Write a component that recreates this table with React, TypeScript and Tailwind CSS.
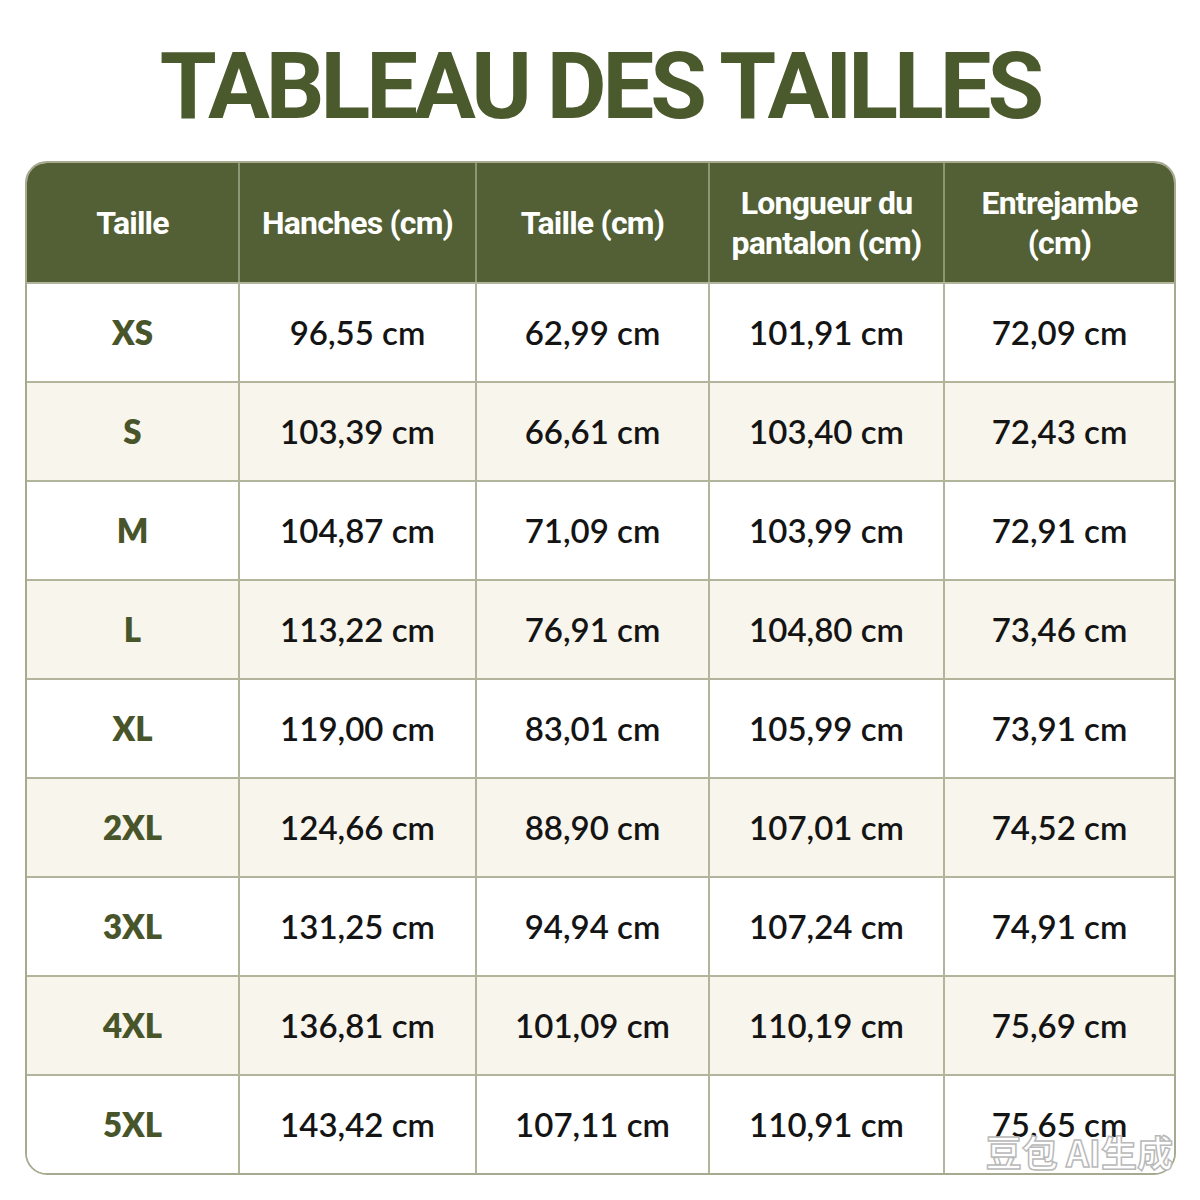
const headers = ["Taille", "Hanches (cm)", "Taille (cm)", "Longueur du\npantalon (cm)", "Entrejambe\n(cm)"];

const rows = [
  ["XS", "96,55 cm", "62,99 cm", "101,91 cm", "72,09 cm"],
  ["S", "103,39 cm", "66,61 cm", "103,40 cm", "72,43 cm"],
  ["M", "104,87 cm", "71,09 cm", "103,99 cm", "72,91 cm"],
  ["L", "113,22 cm", "76,91 cm", "104,80 cm", "73,46 cm"],
  ["XL", "119,00 cm", "83,01 cm", "105,99 cm", "73,91 cm"],
  ["2XL", "124,66 cm", "88,90 cm", "107,01 cm", "74,52 cm"],
  ["3XL", "131,25 cm", "94,94 cm", "107,24 cm", "74,91 cm"],
  ["4XL", "136,81 cm", "101,09 cm", "110,19 cm", "75,69 cm"],
  ["5XL", "143,42 cm", "107,11 cm", "110,91 cm", "75,65 cm"],
];

const condensed = { fontFamily: 'Roboto, "Liberation Sans", sans-serif' };

export default function App() {
  return (
    <div className="relative w-[1200px] h-[1200px] bg-white" style={{ fontFamily: 'Lato, "Open Sans", sans-serif' }}>
      <h1
        className="pt-[41px] h-[161px] text-center text-[92px] leading-none font-bold tracking-[-4px] text-[#4b5a2c]"
        style={condensed}
      >
        TABLEAU DES TAILLES
      </h1>

      <div className="ml-[25px] w-[1151px] rounded-[22px] border-2 border-[#a8aa90] overflow-hidden">
        <div className="grid grid-cols-[211px_237px_233px_235px_231px] h-[119px] bg-[#535f35]">
          {headers.map((h, i) => (
            <div
              key={i}
              className={`flex items-center justify-center text-center whitespace-pre-line text-white font-bold text-[32px] leading-[40px] tracking-[-0.8px] ${i > 0 ? "border-l-2 border-[#8d9574]" : ""}`}
              style={condensed}
            >
              {h}
            </div>
          ))}
        </div>
        {rows.map((r, ri) => (
          <div
            key={ri}
            className={`grid grid-cols-[211px_237px_233px_235px_231px] h-[99px] border-t-2 border-[#b3b49c] ${ri % 2 === 1 ? "bg-[#f8f5ec]" : "bg-white"}`}
          >
            {r.map((c, ci) => (
              <div
                key={ci}
                className={`flex items-center justify-center ${ci > 0 ? "border-l-2 border-[#b3b49c]" : ""} ${ci === 0 ? "text-[#48552a] font-extrabold" : "text-[#141414] font-semibold"} text-[33px]`}
              >
                {c}
              </div>
            ))}
          </div>
        ))}
      </div>

      <div
        className="absolute right-[27px] top-[1133px] text-[36px] leading-none font-bold text-white [-webkit-text-stroke:1.5px_#b9b9b9]"
        style={{ fontFamily: '"Noto Sans CJK SC", sans-serif' }}
      >
        豆包 AI生成
      </div>
    </div>
  );
}
